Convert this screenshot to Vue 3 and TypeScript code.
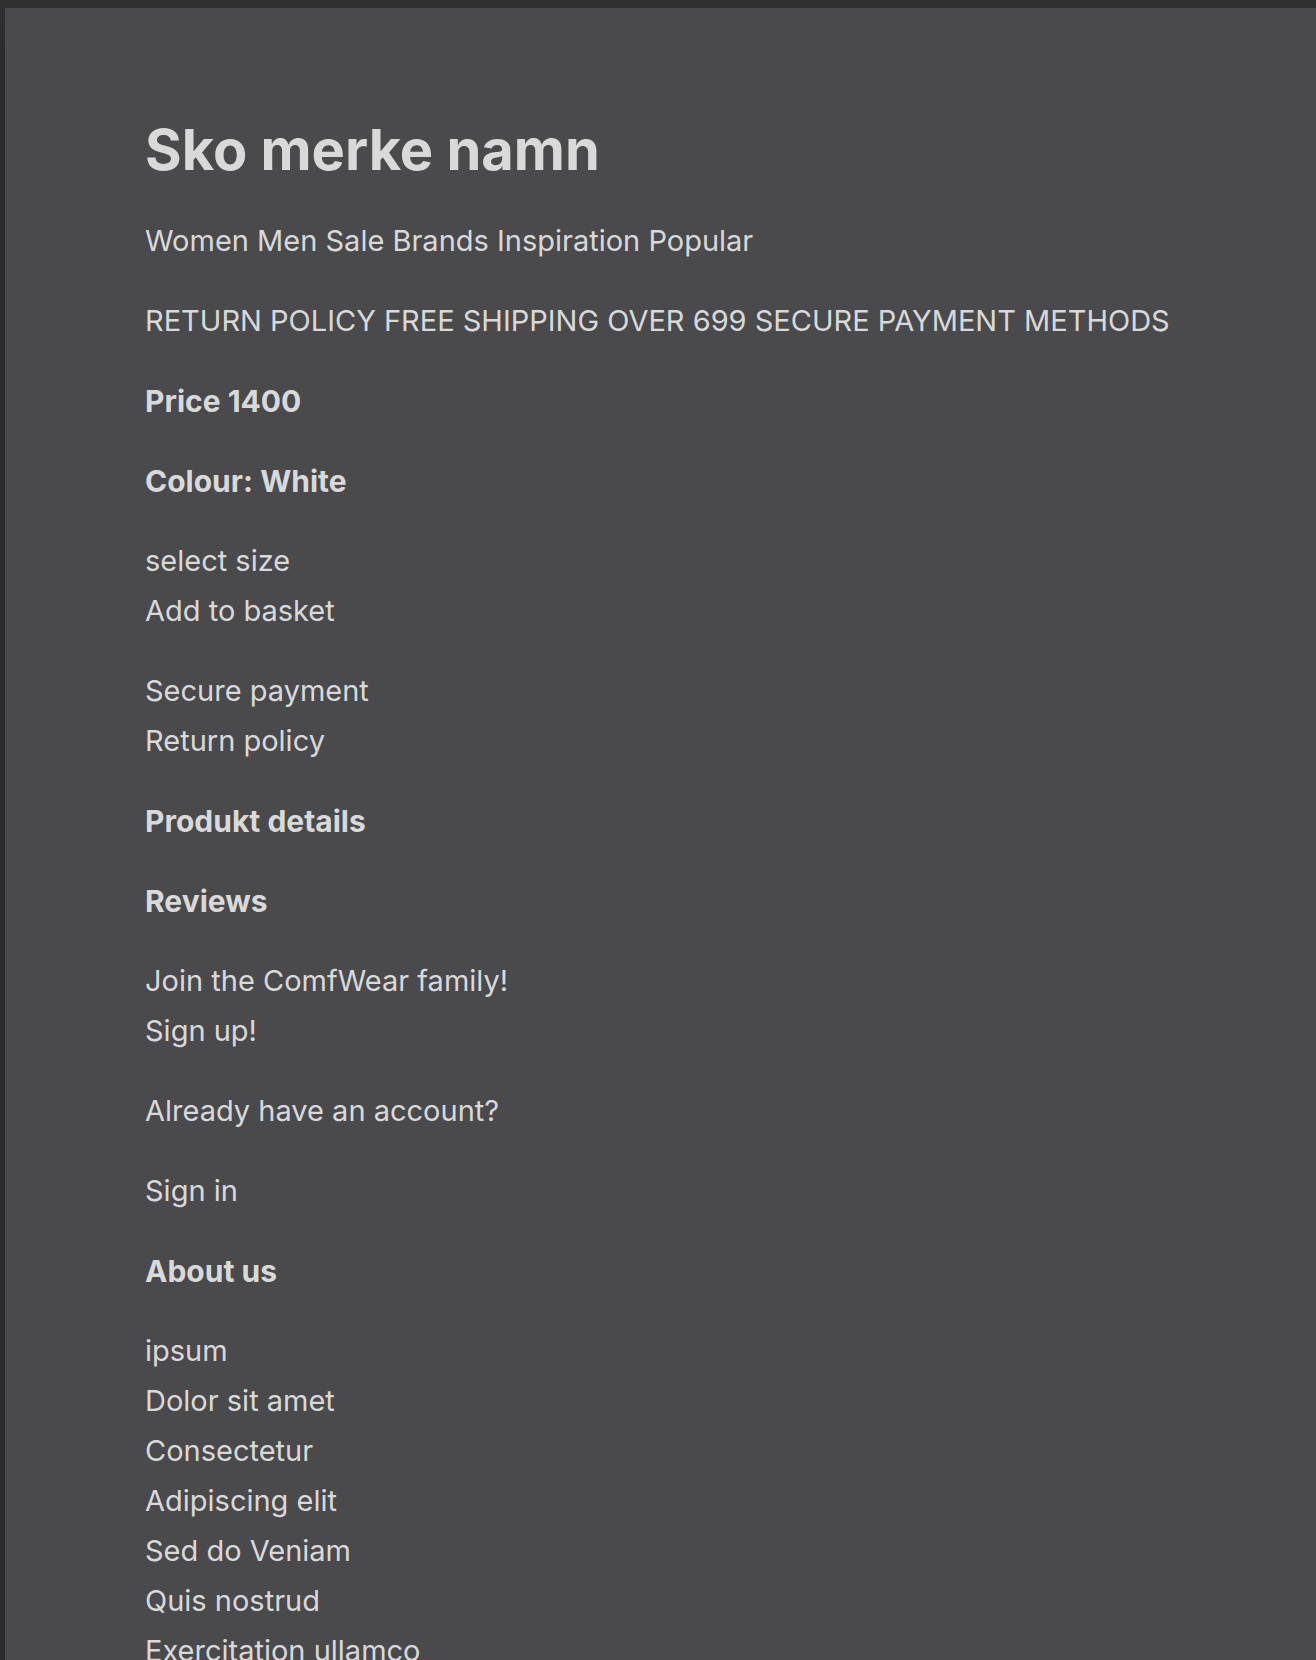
<script setup lang="ts">
interface Block {
  lines: string[]
  strong?: boolean
}

const title = 'Sko merke namn'
const blocks: Block[] = [
  { lines: ['Women Men Sale Brands Inspiration Popular'] },
  { lines: ['RETURN POLICY FREE SHIPPING OVER 699 SECURE PAYMENT METHODS'] },
  { lines: ['Price 1400'], strong: true },
  { lines: ['Colour: White'], strong: true },
  { lines: ['select size', 'Add to basket'] },
  { lines: ['Secure payment', 'Return policy'] },
  { lines: ['Produkt details'], strong: true },
  { lines: ['Reviews'], strong: true },
  { lines: ['Join the ComfWear family!', 'Sign up!'] },
  { lines: ['Already have an account?'] },
  { lines: ['Sign in'] },
  { lines: ['About us'], strong: true },
  {
    lines: [
      'ipsum',
      'Dolor sit amet',
      'Consectetur',
      'Adipiscing elit',
      'Sed do Veniam',
      'Quis nostrud',
      'Exercitation ullamco',
    ],
  },
]
</script>

<template>
  <div class="window">
    <main class="sheet">
      <h1>{{ title }}</h1>
      <p v-for="(block, i) in blocks" :key="i" :class="{ strong: block.strong }">
        <template v-for="(line, j) in block.lines" :key="j"><br v-if="j > 0" />{{ line }}</template>
      </p>
    </main>
  </div>
</template>

<style>
body {
  background: #2c2c2c;
}
</style>

<style scoped>
.window {
  box-sizing: border-box;
  height: 100vh;
  padding: 8px 0 0 5px;
  overflow: hidden;
  background: linear-gradient(#303030, #2b2b2b 60px);
}

.sheet {
  min-height: 100%;
  box-sizing: border-box;
  padding: 104px 60px 0 140px;
  background: #4a4a4c;
  color: #d9d9d9;
  font-family: Inter, sans-serif;
  font-size: 29px;
  line-height: 50px;
}

h1 {
  margin: 0 0 28px;
  font-size: 56px;
  line-height: 76px;
  font-weight: 700;
}

p {
  margin: 0 0 30px;
}

.strong {
  font-size: 30px;
  font-weight: 700;
}
</style>
